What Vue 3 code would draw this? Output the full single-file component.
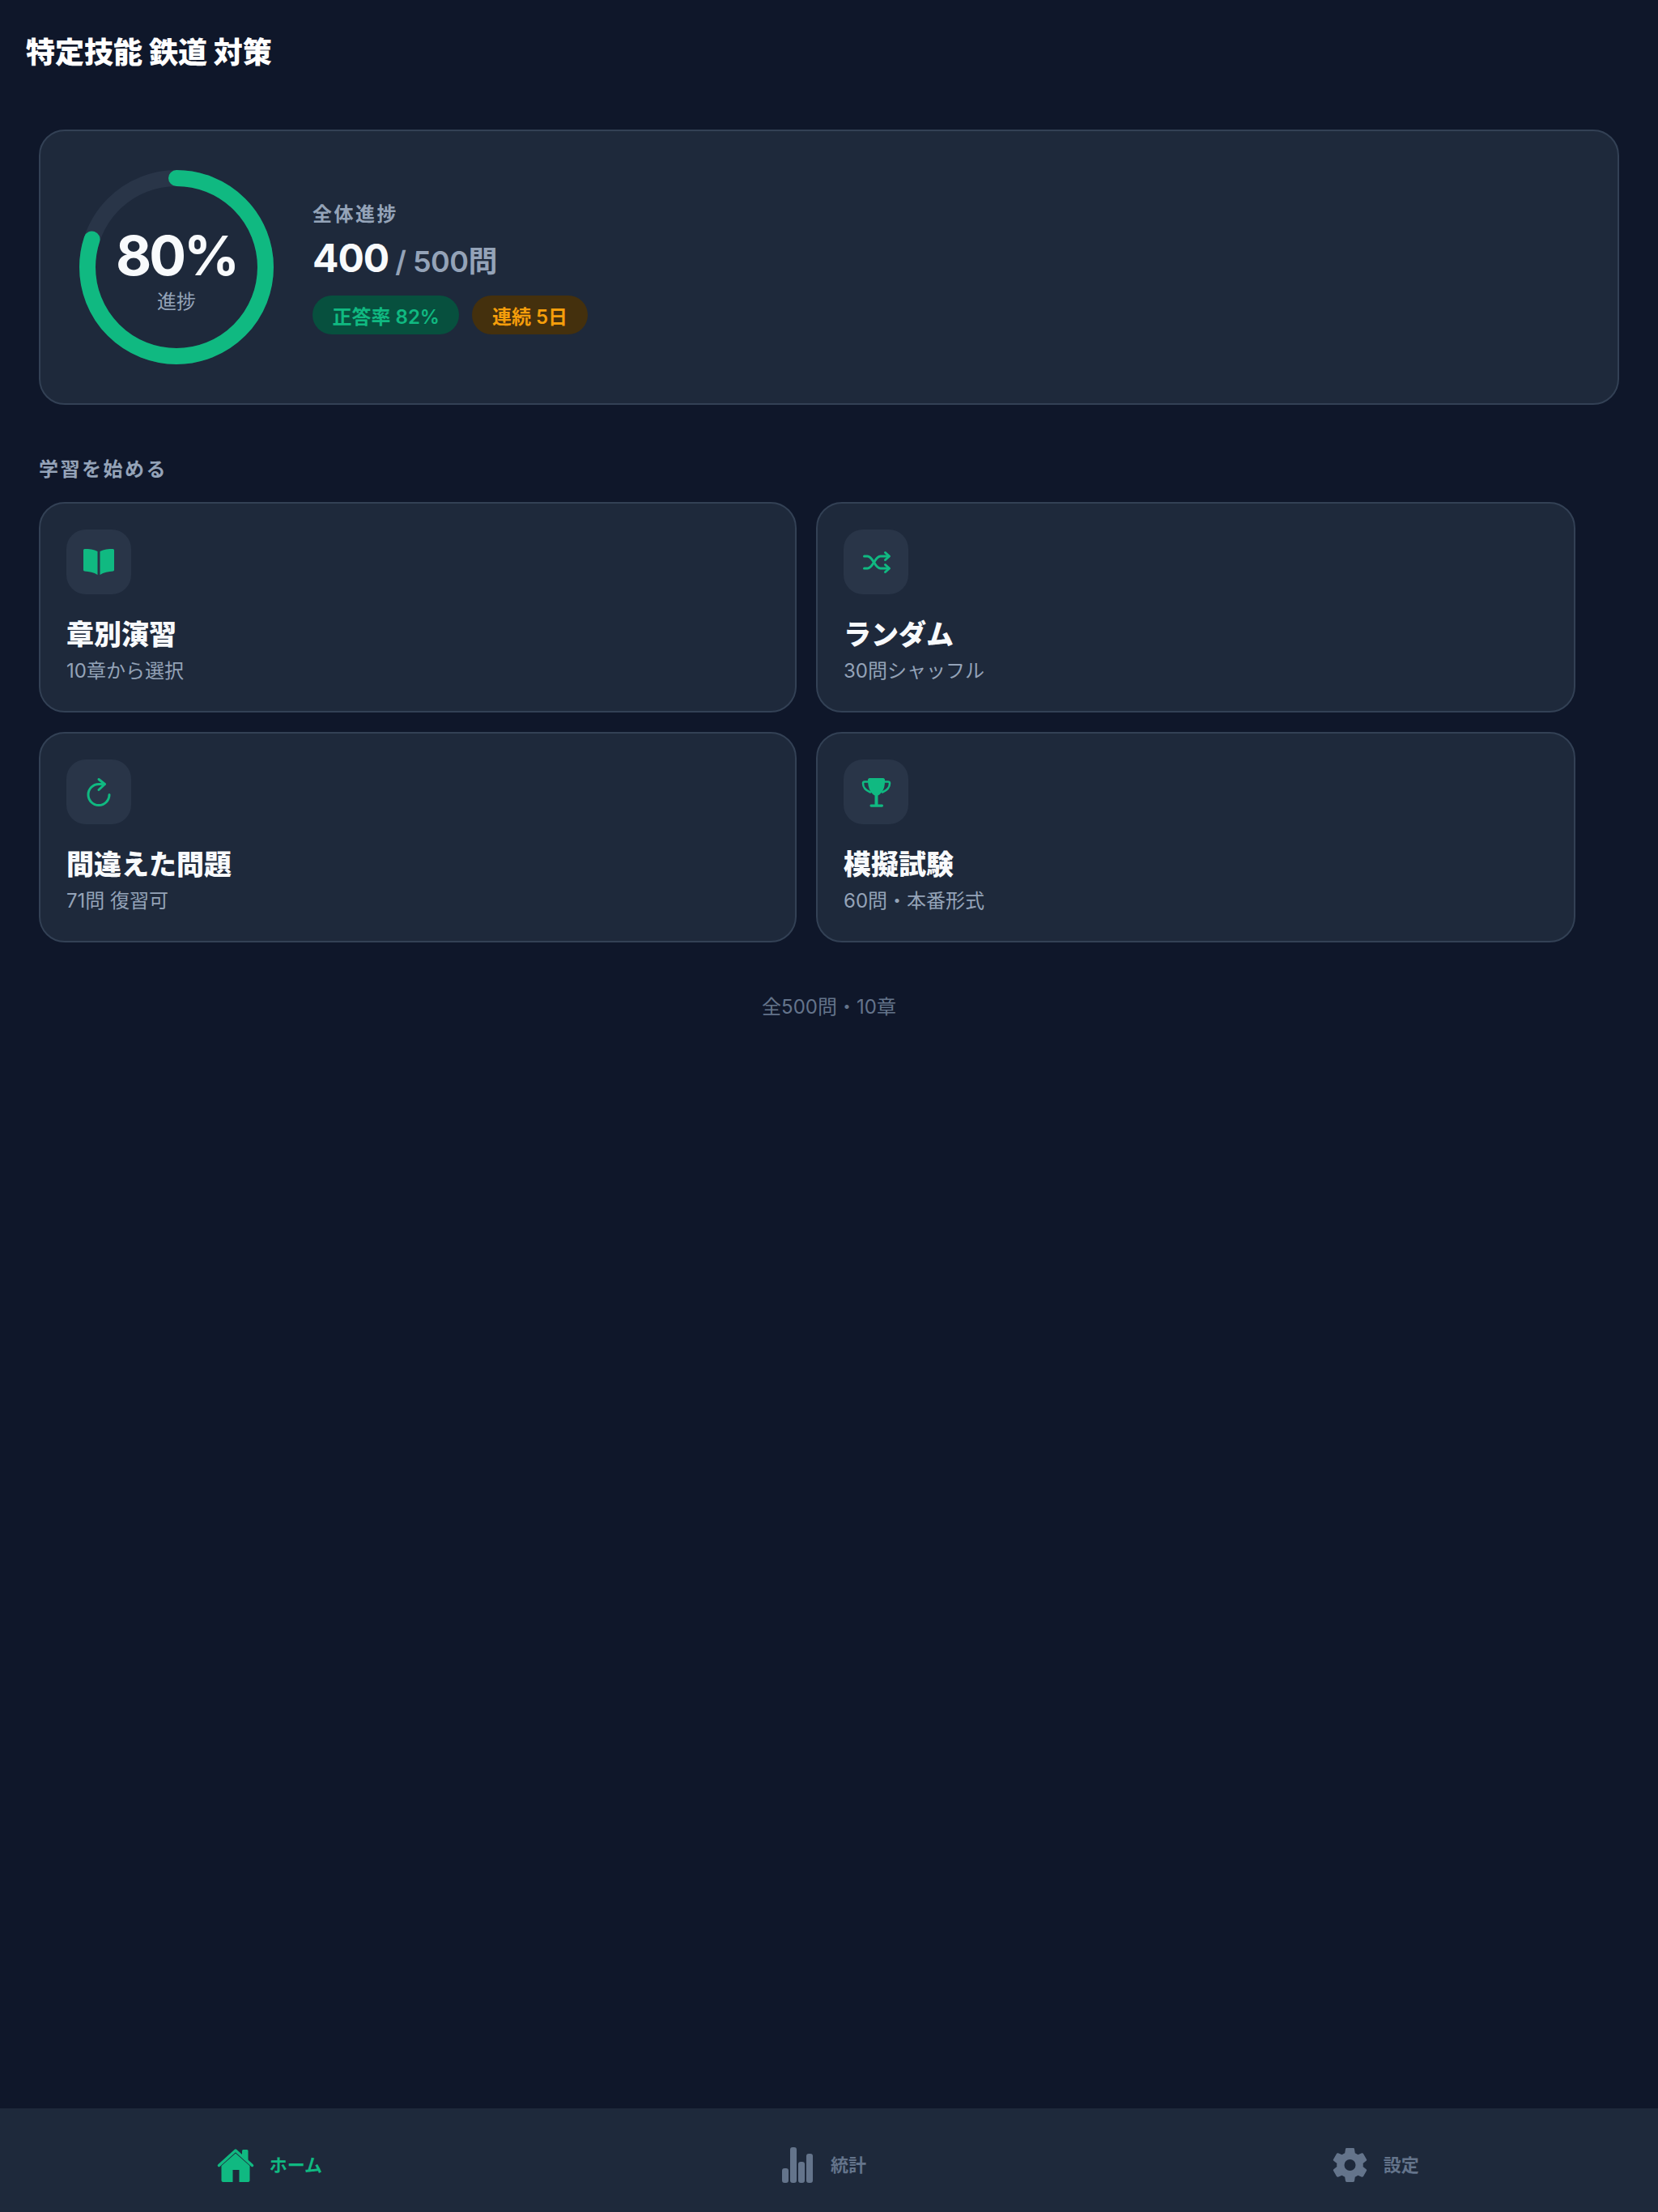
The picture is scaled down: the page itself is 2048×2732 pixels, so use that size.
<script setup>
const actions = [
  { key: "chapter", title: "章別演習", sub: "10章から選択" },
  { key: "random", title: "ランダム", sub: "30問シャッフル" },
  { key: "retry", title: "間違えた問題", sub: "71問 復習可" },
  { key: "exam", title: "模擬試験", sub: "60問・本番形式" },
];

const radius = 110;
const circumference = 2 * Math.PI * radius;
const progress = 0.8;
</script>

<template>
  <div class="app">
    <header class="header">
      <h1 class="app-title">特定技能 鉄道 対策</h1>
    </header>

    <main class="main">
      <section class="hero">
        <div class="ring">
          <svg viewBox="0 0 240 240" width="240" height="240">
            <circle cx="120" cy="120" :r="radius" class="ring-track" />
            <circle
              cx="120"
              cy="120"
              :r="radius"
              class="ring-value"
              :stroke-dasharray="`${circumference * progress} ${circumference}`"
              transform="rotate(-90 120 120)"
            />
          </svg>
          <div class="ring-text">
            <div class="ring-percent">80%</div>
            <div class="ring-label">進捗</div>
          </div>
        </div>
        <div class="hero-info">
          <div class="hero-label">全体進捗</div>
          <div class="hero-count">
            <span class="count-now">400</span>
            <span class="count-total">/ 500問</span>
          </div>
          <div class="badges">
            <span class="badge badge-green">正答率 82%</span>
            <span class="badge badge-amber">連続 5日</span>
          </div>
        </div>
      </section>

      <h2 class="section-title">学習を始める</h2>

      <div class="action-grid">
        <button v-for="a in actions" :key="a.key" type="button" class="action">
          <span class="action-icon">
            <svg v-if="a.key === 'chapter'" viewBox="0 0 40 40" width="40" height="40" fill="#10b981">
              <path d="M1 5.500Q1 4 2.500 4C8 4 14 4.500 18.500 7V36C14 33 8 32 2.500 31.500Q1 31.300 1 30z" />
              <path d="M39 5.500Q39 4 37.500 4C32 4 26 4.500 21.500 7V36C26 33 32 32 37.500 31.500Q39 31.300 39 30z" />
            </svg>
            <svg v-else-if="a.key === 'random'" viewBox="0 0 40 40" width="40" height="40" fill="none" stroke="#10b981" stroke-width="3" stroke-linecap="round" stroke-linejoin="round">
              <path d="M5.500 13h4c7 0 9 15 16 15h10" />
              <path d="M5.500 28h4c7 0 9-15 16-15h10" />
              <path d="M31.500 8.500l5 4.500-5 4.500" />
              <path d="M31.500 23.500l5 4.500-5 4.500" />
            </svg>
            <svg v-else-if="a.key === 'retry'" viewBox="0 0 40 40" width="40" height="40" fill="none" stroke="#10b981" stroke-width="3" stroke-linecap="round" stroke-linejoin="round">
              <path d="M33 23.500a13 13 0 1 1-13-13h7" />
              <path d="M20 4.500l7.500 6-7.500 7" />
            </svg>
            <svg v-else viewBox="0 0 40 40" width="40" height="40" fill="#10b981">
              <path d="M12 3h17c1 0 2 1 2 2 0 5 0 10-3.500 15-2 2.500-3 3.500-5 4.500v11h5c.8 0 1.500.6 1.500 1.600s-.7 1.600-1.500 1.600H14c-.8 0-1.500-.6-1.500-1.600s.7-1.600 1.500-1.600h4.500v-11c-2-1-3-2-5-4.500C10.500 15 10 10 10 5c0-1 1-2 2-2z" />
              <path d="M10 7.500H6c-1.500 0-2 1-2 2 0 5 3 8.500 9 11M31 7.500h4c1.500 0 2 1 2 2 0 5-3 8.500-9 11" fill="none" stroke="#10b981" stroke-width="2.500" stroke-linecap="round" />
            </svg>
          </span>
          <span class="action-title">{{ a.title }}</span>
          <span class="action-sub">{{ a.sub }}</span>
        </button>
      </div>

      <p class="footnote">全500問・10章</p>
    </main>

    <nav class="tabbar">
      <a class="tab tab-active">
        <svg viewBox="0 0 48 48" width="48" height="48" fill="#10b981">
          <path d="M3.500 26.500 24 8l20.500 18.500" fill="none" stroke="#10b981" stroke-width="3.500" stroke-linecap="round" stroke-linejoin="round" />
          <path d="M24 11.500 41.500 27v18a2 2 0 0 1-2 2h-11V32h-8v15h-12a2 2 0 0 1-2-2V27z" />
          <path d="M32 8.500Q32 7 33.500 7H38q1.500 0 1.500 1.500V23L32 16z" />
        </svg>
        <span>ホーム</span>
      </a>
      <a class="tab">
        <svg viewBox="0 0 48 48" width="48" height="48" fill="#64748b">
          <rect x="6" y="30" width="8" height="18" rx="3" />
          <rect x="16" y="4" width="8" height="44" rx="3" />
          <rect x="26" y="22" width="8" height="26" rx="3" />
          <rect x="36" y="12" width="8" height="36" rx="3" />
        </svg>
        <span>統計</span>
      </a>
      <a class="tab">
        <svg viewBox="0 0 48 48" width="48" height="48" fill="#64748b">
          <path transform="translate(0.500 2)" fill-rule="evenodd" d="M20 3h8c.8 0 1.400.5 1.500 1.200l.8 5c1.300.5 2.500 1.200 3.600 2l4.700-1.900c.7-.3 1.500 0 1.900.6l4 7c.4.700.2 1.500-.4 1.900l-4 3.100c.1.700.2 1.400.2 2.100s-.1 1.400-.2 2.100l4 3.100c.6.400.8 1.200.4 1.900l-4 7c-.4.600-1.200.9-1.900.6l-4.700-1.900c-1.100.8-2.300 1.500-3.600 2l-.8 5c-.1.700-.7 1.200-1.500 1.200h-8c-.8 0-1.400-.5-1.500-1.200l-.8-5c-1.300-.5-2.500-1.200-3.600-2l-4.700 1.900c-.7.300-1.500 0-1.900-.6l-4-7c-.4-.7-.2-1.500.4-1.900l4-3.100c-.1-.7-.2-1.400-.2-2.100s.1-1.400.2-2.100l-4-3.100c-.6-.4-.8-1.200-.4-1.900l4-7c.4-.6 1.200-.9 1.900-.6l4.700 1.900c1.100-.8 2.300-1.500 3.600-2l.8-5C18.600 3.500 19.200 3 20 3zm4 14a7 7 0 1 0 0 14 7 7 0 0 0 0-14z" />
        </svg>
        <span>設定</span>
      </a>
    </nav>
  </div>
</template>

<style>
html,
body {
  margin: 0;
  background: #0f172a;
}
</style>

<style scoped>
.app {
  display: flex;
  flex-direction: column;
  height: 2732px;
  background: #0f172a;
  font-family: Inter, "Noto Sans CJK JP", sans-serif;
  color: #f8fafc;
}

.header {
  padding: 33px 32px 0;
  height: 95px;
}

.app-title {
  margin: 0;
  font-size: 36px;
  line-height: 64px;
  font-weight: 800;
  color: #fff;
}

.main {
  flex: 1;
  padding: 32px 48px 0;
}

.hero {
  display: flex;
  align-items: center;
  gap: 48px;
  padding: 48px;
  background: #1e293b;
  border: 2px solid #334155;
  border-radius: 32px;
}

.ring {
  position: relative;
  width: 240px;
  height: 240px;
  flex: none;
}

.ring svg {
  display: block;
}

.ring-track,
.ring-value {
  fill: none;
  stroke-width: 20;
}

.ring-track {
  stroke: #293548;
}

.ring-value {
  stroke: #10b981;
  stroke-linecap: round;
}

.ring-text {
  position: absolute;
  inset: 0;
  padding-top: 4px;
  display: flex;
  flex-direction: column;
  align-items: center;
  justify-content: center;
}

.ring-percent {
  font-size: 68px;
  line-height: 80px;
  font-weight: 700;
  letter-spacing: -3px;
  color: #f8fafc;
}

.ring-label {
  margin-top: 2px;
  font-size: 24px;
  line-height: 32px;
  color: #94a3b8;
}

.hero-info {
  display: flex;
  flex-direction: column;
}

.hero-label {
  font-size: 24px;
  line-height: 36px;
  font-weight: 600;
  letter-spacing: 2.500px;
  color: #94a3b8;
}

.hero-count {
  margin-top: 4px;
  display: flex;
  align-items: baseline;
  gap: 8px;
}

.count-now {
  font-size: 48px;
  line-height: 64px;
  font-weight: 700;
  letter-spacing: -1px;
  color: #f8fafc;
}

.count-total {
  font-size: 36px;
  font-weight: 600;
  letter-spacing: -0.500px;
  color: #94a3b8;
}

.badges {
  display: flex;
  gap: 16px;
  margin-top: 14px;
}

.badge {
  height: 48px;
  padding: 0 24.500px;
  border-radius: 24px;
  display: flex;
  align-items: center;
  font-size: 24px;
  font-weight: 600;
}

.badge-green {
  background: #07503e;
  color: #10b981;
}

.badge-amber {
  background: #44300d;
  color: #f59e0b;
}

.section-title {
  margin: 62px 0 22px;
  font-size: 24px;
  line-height: 36px;
  font-weight: 600;
  letter-spacing: 2.500px;
  color: #94a3b8;
}

.action-grid {
  display: grid;
  grid-template-columns: 936px 938px;
  gap: 24.500px 24px;
}

.action {
  display: flex;
  flex-direction: column;
  align-items: flex-start;
  height: 259.500px;
  padding: 32px;
  box-sizing: border-box;
  background: #1e293b;
  border: 2px solid #334155;
  border-radius: 32px;
  font-family: inherit;
  text-align: left;
}

.action-icon {
  width: 80px;
  height: 80px;
  border-radius: 24px;
  background: #293548;
  display: flex;
  align-items: center;
  justify-content: center;
}

.action-title {
  margin-top: 26px;
  font-size: 34px;
  line-height: 48px;
  font-weight: 800;
  color: #f8fafc;
}

.action-sub {
  margin-top: 5px;
  font-size: 24px;
  line-height: 32px;
  color: #94a3b8;
}

.footnote {
  margin: 62px 0 0;
  text-align: center;
  font-size: 24px;
  line-height: 36px;
  color: #64748b;
}

.tabbar {
  height: 128px;
  flex: none;
  display: grid;
  grid-template-columns: repeat(3, 1fr);
  background: #1e293b;
}

.tab {
  display: flex;
  align-items: center;
  justify-content: center;
  gap: 18px;
  padding: 8px 18px 0 0;
  font-size: 22px;
  font-weight: 600;
  color: #64748b;
}

.tab-active {
  color: #10b981;
}
</style>
